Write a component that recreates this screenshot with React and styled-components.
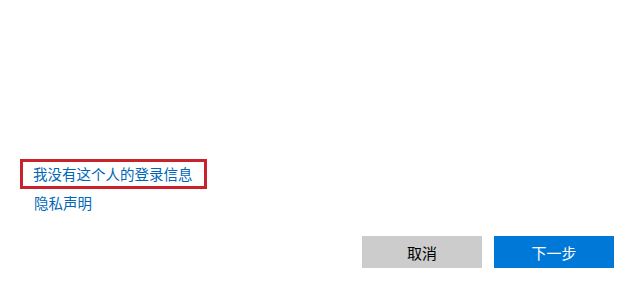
import styled, { createGlobalStyle } from 'styled-components';

const GlobalStyle = createGlobalStyle`
  html, body {
    margin: 0;
    padding: 0;
    background: #ffffff;
  }
  body {
    font-family: 'Segoe UI', 'Noto Sans CJK SC', 'Noto Sans', sans-serif;
  }
`;

const Page = styled.div`
  width: 632px;
  height: 292px;
  box-sizing: border-box;
  padding: 159px 18px 0 20px;
  display: flex;
  flex-direction: column;
`;

const Highlight = styled.div`
  width: 187px;
  height: 30px;
  box-sizing: border-box;
  border: 3px solid #c8232c;
  display: flex;
  align-items: center;
  padding-left: 10px;
`;

const Link = styled.a`
  font-size: 14.5px;
  line-height: 20px;
  color: #0067b8;
  text-decoration: none;
  cursor: pointer;
  white-space: nowrap;
`;

const LinkRow = styled.div`
  display: flex;
  padding-left: 14px;
  margin-top: 4px;
`;

const Actions = styled.div`
  display: flex;
  justify-content: flex-end;
  gap: 12px;
  margin-top: 23px;
`;

const Button = styled.button`
  width: 120px;
  height: 32px;
  border: none;
  margin: 0;
  padding: 0;
  font-family: inherit;
  font-size: 15px;
  color: ${(p) => (p.$primary ? '#ffffff' : '#000000')};
  background: ${(p) => (p.$primary ? '#0078d7' : '#cccccc')};
  cursor: pointer;
`;

export default function App() {
  return (
    <>
      <GlobalStyle />
      <Page>
        <Highlight>
          <Link>我没有这个人的登录信息</Link>
        </Highlight>
        <LinkRow>
          <Link>隐私声明</Link>
        </LinkRow>
        <Actions>
          <Button>取消</Button>
          <Button $primary>下一步</Button>
        </Actions>
      </Page>
    </>
  );
}
